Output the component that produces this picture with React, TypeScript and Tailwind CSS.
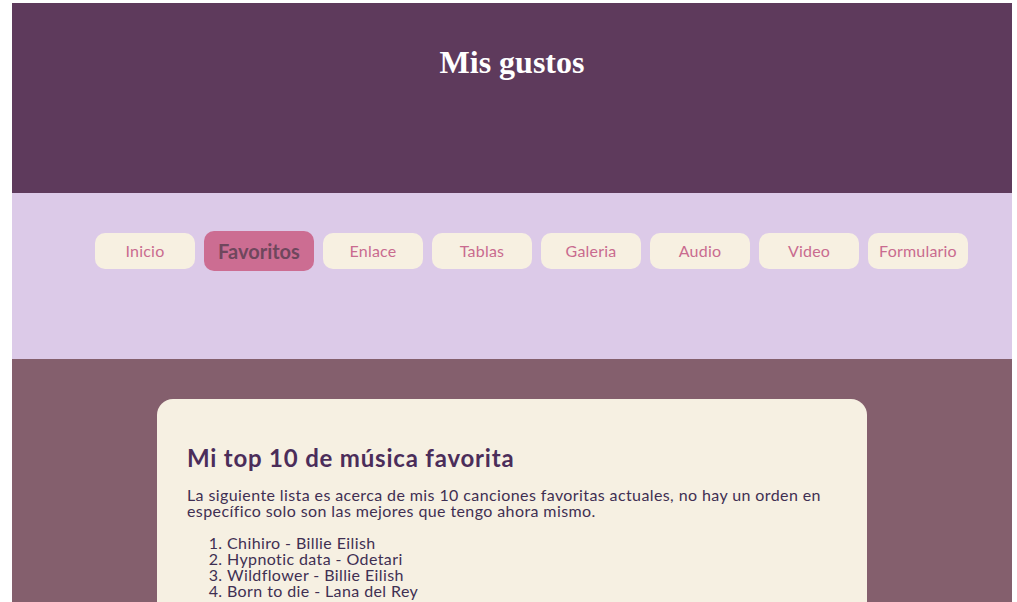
const links = ["Inicio", "Favoritos", "Enlace", "Tablas", "Galeria", "Audio", "Video", "Formulario"];

const songs = [
  "Chihiro - Billie Eilish",
  "Hypnotic data - Odetari",
  "Wildflower - Billie Eilish",
  "Born to die - Lana del Rey",
  "Lovely - Billie Eilish",
  "Summertime sadness - Lana del Rey",
  "Birds of a feather - Billie Eilish",
  "Young and beautiful - Lana del Rey",
  "Ocean eyes - Billie Eilish",
  "Video games - Lana del Rey",
];

function App() {
  return (
    <div className="ml-[12px] mt-[3px] w-[1000px] font-['Lato',sans-serif]">
      <header className="h-[190px] bg-[#5e3a5c] pt-[41px] text-center">
        <h1 className="font-['Liberation_Serif',serif] text-[32px] font-bold leading-[37px] text-white">Mis gustos</h1>
      </header>

      <nav className="h-[166px] bg-[#dccae8] pl-[83px] pt-[38px]">
        <ul className="flex h-[40px] items-center gap-[9px]">
          {links.map((l) =>
            l === "Favoritos" ? (
              <li key={l} className="flex h-[40px] w-[110px] items-center justify-center rounded-[10px] bg-[#cc6d92] text-[20px] font-bold text-[#6f475d]">
                {l}
              </li>
            ) : (
              <li key={l} className="flex h-[36px] w-[100px] items-center justify-center rounded-[10px] bg-[#f7f0e1] text-[16px] tracking-[0.2px] text-[#c96b8f]">
                {l}
              </li>
            )
          )}
        </ul>
      </nav>

      <main className="bg-[#845f6d] pt-[40px] pb-[40px]">
        <section className="mx-auto w-[710px] rounded-[16px] bg-[#f6f0e2] px-[30px] pt-[44px] pb-[30px] text-[#3f2f52]">
          <h2 className="text-[24px] font-bold leading-[29px] tracking-[0.8px] text-[#4b2d5a]">Mi top 10 de música favorita</h2>
          <p className="mt-[15px] text-[16px] leading-[16px] tracking-[0.4px]">
            La siguiente lista es acerca de mis 10 canciones favoritas actuales, no hay un orden en específico solo son las mejores que tengo ahora mismo.
          </p>
          <ol className="mt-[16px] list-decimal pl-[40px] text-[16px] leading-[16px] tracking-[0.4px]">
            {songs.map((s) => (
              <li key={s}>{s}</li>
            ))}
          </ol>
        </section>
      </main>
    </div>
  );
}

export default App;
